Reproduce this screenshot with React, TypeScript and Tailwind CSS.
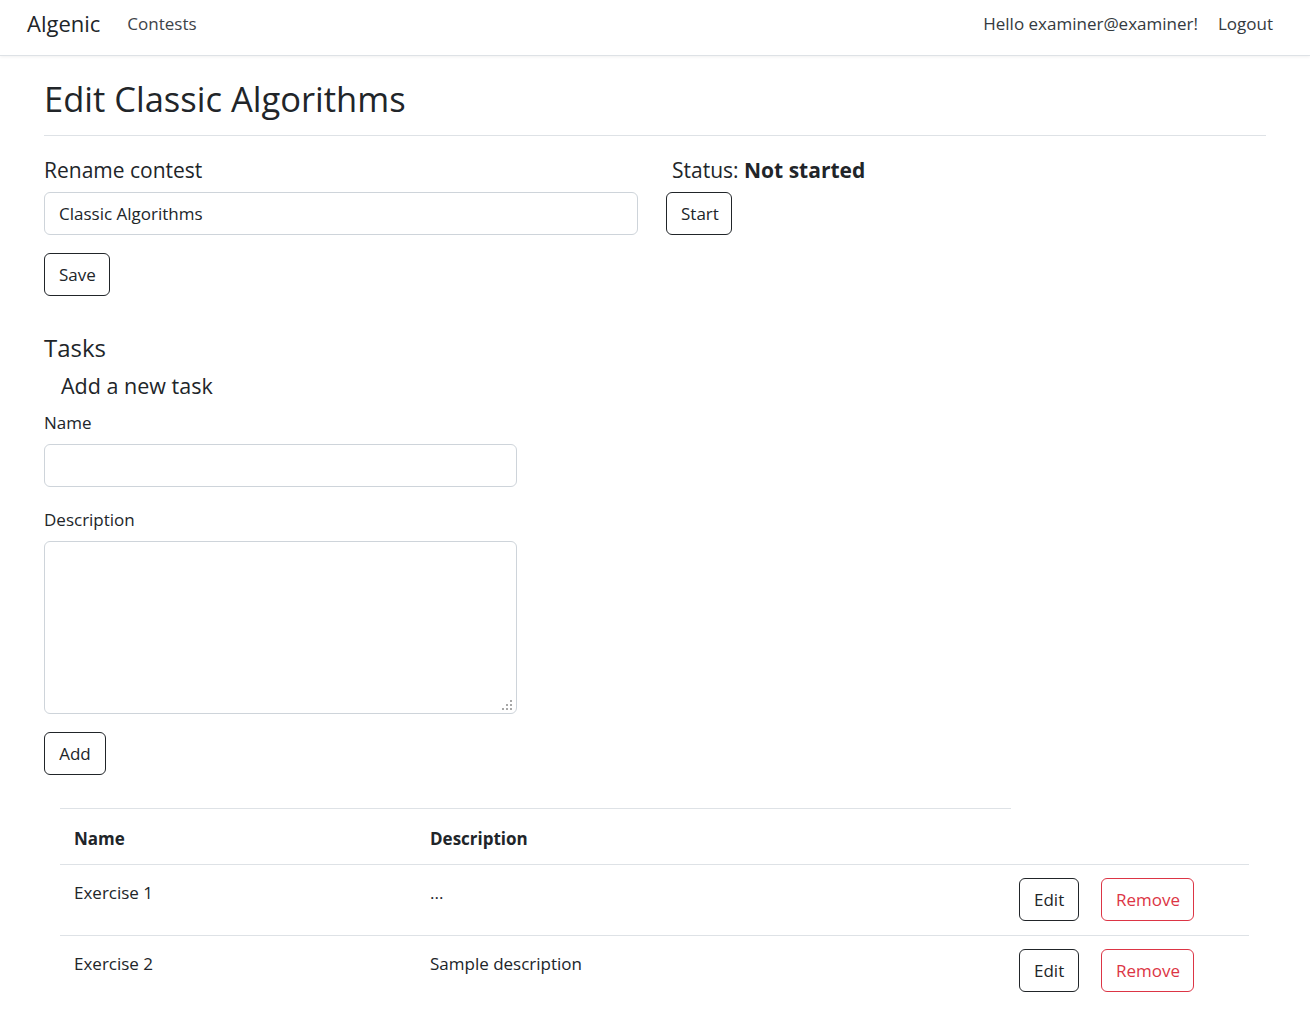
import React from 'react';

const tasks = [
  { id: 1, name: 'Exercise 1', description: '...' },
  { id: 2, name: 'Exercise 2', description: 'Sample description' },
];

const btn =
  'h-[43px] rounded-[6px] border bg-white px-[14px] text-[17px] leading-none';

export default function App() {
  return (
    <div className="min-h-screen bg-white font-['Open_Sans',sans-serif] text-[17px] text-[#212529]">
      {/* navbar */}
      <nav className="flex h-[56px] items-center justify-between border-b border-[#dee2e6] pb-[8px] pl-[27px] pr-[37px] shadow-[0_1px_3px_rgba(0,0,0,0.06)]">
        <div className="flex items-center">
          <a className="text-[22px] text-[#212529]">Algenic</a>
          <a className="ml-[27px] text-[17px] text-[#3d4349]">Contests</a>
        </div>
        <div className="flex items-center gap-[20px] text-[17px] text-[#343a40]">
          <span>Hello examiner@examiner!</span>
          <a>Logout</a>
        </div>
      </nav>

      <main className="px-[44px] pt-[21px]">
        <h1 className="text-[34.5px] leading-[43px] font-normal">Edit Classic Algorithms</h1>
        <hr className="mt-[15px] border-[#dee2e6]" />

        <div className="mt-[22px] grid grid-cols-[594px_1fr] gap-x-[28px]">
          <div>
            <label className="block text-[21px] leading-[24px]">Rename contest</label>
            <input
              className="mt-[10px] block h-[43px] w-full rounded-[6px] border border-[#ced4da] px-[14px] text-[17px] text-[#212529] outline-none"
              defaultValue="Classic Algorithms"
            />
            <button className={`${btn} mt-[18px] w-[66px] border-[#212529]`}>Save</button>
          </div>
          <div>
            <div className="pl-[6px] text-[21px] leading-[24px]">
              Status: <span className="font-bold">Not started</span>
            </div>
            <button className={`${btn} mt-[10px] w-[66px] border-[#212529]`}>Start</button>
          </div>
        </div>

        <h4 className="mt-[37px] text-[24px] leading-[29px]">Tasks</h4>
        <h5 className="mt-[12px] pl-[17px] text-[21.5px] leading-[24px]">Add a new task</h5>

        <div className="w-[473px]">
          <label className="mt-[13px] block leading-[24px]">Name</label>
          <input className="mt-[9px] block h-[43px] w-full rounded-[6px] border border-[#ced4da] px-[14px] outline-none" />
          <label className="mt-[21px] block leading-[24px]">Description</label>
          <div className="relative mt-[9px]">
            <textarea className="block h-[173px] w-full resize-none rounded-[6px] border border-[#ced4da] px-[14px] py-[8px] outline-none" />
            <svg className="absolute bottom-[4px] right-[5px]" width="10" height="10" viewBox="0 0 10 10" fill="#a8a8a8">
              <rect x="8" y="0" width="2" height="2" />
              <rect x="4" y="4" width="2" height="2" />
              <rect x="8" y="4" width="2" height="2" />
              <rect x="0" y="8" width="2" height="2" />
              <rect x="4" y="8" width="2" height="2" />
              <rect x="8" y="8" width="2" height="2" />
            </svg>
          </div>
          <button className={`${btn} mt-[18px] h-[42px] w-[62px] border-[#212529]`}>Add</button>
        </div>

        <table className="mt-[33px] ml-[16px] w-[1189px] border-collapse text-left">
          <thead>
            <tr className="border-b border-[#dee2e6]">
              <th className="w-[356px] border-t border-[#dee2e6] px-[14px] pt-[18px] pb-[13px] leading-[24px] font-bold">Name</th>
              <th className="w-[595px] border-t border-[#dee2e6] px-[14px] pt-[18px] pb-[13px] leading-[24px] font-bold">Description</th>
              <th className="border-0" />
            </tr>
          </thead>
          <tbody>
            {tasks.map((t) => (
              <tr key={t.id} className="border-b border-[#dee2e6] last:border-b-0">
                <td className="px-[14px] pt-[16px] align-top leading-[24px]">{t.name}</td>
                <td className="px-[14px] pt-[16px] align-top leading-[24px]">{t.description}</td>
                <td className="px-[8px] pt-[13px] pb-[14px] align-top">
                  <div className="flex gap-[22px]">
                    <button className={`${btn} w-[60px] border-[#212529]`}>Edit</button>
                    <button className={`${btn} w-[93px] border-[#dc3545] text-[#dc3545]`}>Remove</button>
                  </div>
                </td>
              </tr>
            ))}
          </tbody>
        </table>
      </main>
    </div>
  );
}
